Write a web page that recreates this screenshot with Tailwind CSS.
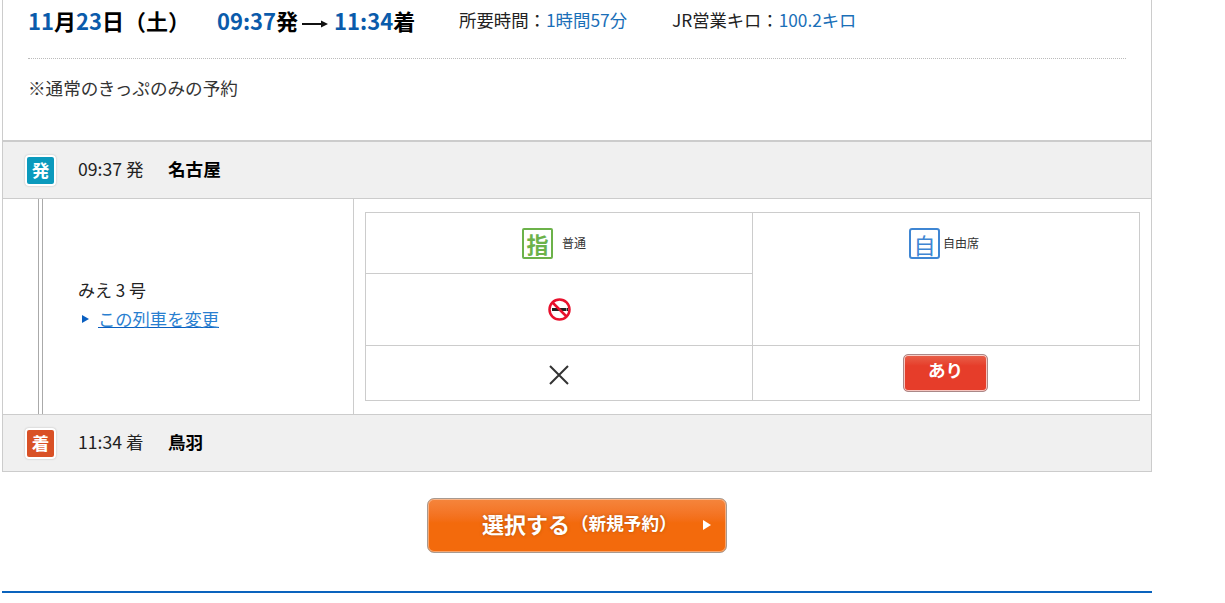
<!DOCTYPE html>
<html lang="ja">
<head>
    <meta charset="UTF-8">
    <title>列車選択</title>
    <script src="https://cdn.jsdelivr.net/npm/@tailwindcss/browser@4"></script>
</head>
<body class="bg-white text-[#222] font-['Noto_Sans_CJK_JP','Liberation_Sans',sans-serif] overflow-hidden">
<div class="w-[1225px] h-[603px] overflow-hidden">
    <div class="ml-[2px] w-[1150px]">
        <!-- Summary -->
        <div class="border-x border-[#ccc] h-[140px] px-[25px]">
            <div class="h-[59px] border-b border-dotted border-[#bbb] flex items-start pt-[4px]">
                <div class="w-[189px] text-[22px] leading-[32px] font-bold text-black whitespace-nowrap"><span class="text-[#0a5bab]">11</span>月<span class="text-[#0a5bab]">23</span>日（土）</div>
                <div class="w-[242px] flex items-center text-[22px] leading-[32px] font-bold text-black whitespace-nowrap">
                    <span class="text-[#0a5bab]">09:37</span>発
                    <svg class="w-[26px] h-[10px] ml-[4px] mr-[6px] mt-[8px]" viewBox="0 0 26 10"><path d="M0 5h20" stroke="#111" stroke-width="2"/><path d="M19 1.5l7 3.5-7 3.500z" fill="#111"/></svg>
                    <span class="text-[#0a5bab]">11:34</span>着
                </div>
                <div class="w-[213px] text-[17.4px] leading-[32px] text-[#222] whitespace-nowrap">所要時間：<span class="text-[#1a6fb8]">1時間57分</span></div>
                <div class="text-[17.3px] leading-[32px] text-[#222] whitespace-nowrap">JR営業キロ：<span class="text-[#1a6fb8]">100.2キロ</span></div>
            </div>
            <p class="mt-[17px] text-[17.6px] leading-[24px] text-[#333]">※通常のきっぷのみの予約</p>
        </div>

        <!-- Itinerary -->
        <div class="border border-t-2 border-[#ccc]">
            <div class="h-[57px] bg-[#f0f0f0] border-b border-[#ccc] flex items-center pl-[22px]">
                <span class="w-[31px] h-[31px] flex items-center justify-center rounded-[4px] border-2 border-white shadow-[0_0_2px_rgba(0,0,0,0.25)] bg-[#0b9abd] text-white text-[17.6px] font-bold leading-none">発</span>
                <span class="ml-[22px] w-[90px] pb-[2px] text-[17.6px] text-[#222]">09:37 発</span>
                <span class="pb-[2px] text-[17.6px] font-bold text-black">名古屋</span>
            </div>
            <div class="h-[216px] flex border-b border-[#ccc]">
                <div class="w-[351px] border-r border-[#ccc] flex">
                    <div class="ml-[35px] w-[5px] border-x border-[#aaa]"></div>
                    <div class="ml-[35px] pt-[78px]">
                        <p class="text-[17px] leading-[26px] text-[#222]">みえ 3 号</p>
                        <a href="#" class="mt-[3px] flex items-center text-[17.3px] leading-[26px]">
                            <span class="ml-[4px] mr-[9px] w-0 h-0 border-y-[4px] border-y-transparent border-l-[7px] border-l-[#0a5fc0]"></span>
                            <span class="text-[#2a7fd0] underline decoration-[#0a5fc0]">この列車を変更</span>
                        </a>
                    </div>
                </div>
                <div class="flex-1 pt-[13px] pl-[11px] pr-[11px]">
                    <div class="w-[775px] h-[189px] border border-[#ccc] grid grid-cols-[387px_1fr] grid-rows-[61px_72px_1fr]">
                        <div class="border-b border-r border-[#ccc] flex items-center justify-center pr-[10px]">
                            <span class="w-[31px] h-[31px] flex items-center justify-center border-[2.5px] border-[#6cb24a] rounded-[2px] text-[#6cb24a] text-[22px] font-bold leading-none">指</span>
                            <span class="ml-[9px] text-[12px] text-[#333]">普通</span>
                        </div>
                        <div class="row-span-2 border-b border-[#ccc] flex items-start justify-center pt-[15px] pr-[4px]">
                            <span class="w-[31px] h-[31px] flex items-center justify-center border-[2.5px] border-[#3f86d3] rounded-[3px] text-[#3f86d3] text-[22px] leading-none">自</span>
                            <span class="ml-[3px] mt-[6px] text-[12px] text-[#333]">自由席</span>
                        </div>
                        <div class="border-b border-r border-[#ccc] flex items-center justify-center">
                            <svg class="w-[25px] h-[25px]" viewBox="0 0 25 25">
                                <rect x="5" y="11" width="14" height="3" fill="#222"/>
                                <rect x="19.500" y="11" width="1.500" height="3" fill="#222"/>
                                <circle cx="12.500" cy="12.500" r="10" fill="none" stroke="#e8112d" stroke-width="2.500"/>
                                <path d="M5.500 5.500l14 14" stroke="#e8112d" stroke-width="2.500"/>
                            </svg>
                        </div>
                        <div class="border-r border-[#ccc] flex items-center justify-center pt-[3px]">
                            <svg class="w-[20px] h-[20px]" viewBox="0 0 20 20"><path d="M1 1l18 18M19 1L1 19" stroke="#333" stroke-width="2" fill="none"/></svg>
                        </div>
                        <div class="flex items-center justify-center pr-[1px]">
                            <span class="w-[85px] h-[38px] flex items-center justify-center pb-[6px] rounded-[5px] border border-[#a88] ring-1 ring-inset ring-white/70 bg-gradient-to-b from-[#e8604a] from-0% to-[#e63d2a] to-30% text-white text-[17.6px] font-bold leading-none">あり</span>
                        </div>
                    </div>
                </div>
            </div>
            <div class="h-[56px] bg-[#f0f0f0] flex items-center pl-[22px]">
                <span class="w-[31px] h-[31px] flex items-center justify-center rounded-[4px] border-2 border-white shadow-[0_0_2px_rgba(0,0,0,0.25)] bg-[#d95126] text-white text-[17.6px] font-bold leading-none">着</span>
                <span class="ml-[22px] w-[90px] pb-[2px] text-[17.6px] text-[#222]">11:34 着</span>
                <span class="pb-[2px] text-[17.6px] font-bold text-black">鳥羽</span>
            </div>
        </div>

        <!-- Action -->
        <div class="pt-[26px] flex justify-center">
            <button class="relative w-[300px] h-[55px] rounded-[7px] border border-[#a89a90] ring-1 ring-inset ring-white/40 bg-gradient-to-b from-[#f5853c] from-0% to-[#f36a0c] to-45% text-white font-bold flex items-center pl-[54px] pb-[6px]">
                <span class="text-[22px] leading-none [text-shadow:0_0_3px_rgba(120,60,0,0.5)]">選択する</span>
                <span class="text-[17.6px] leading-none ml-[1px] [text-shadow:0_0_3px_rgba(120,60,0,0.5)]">（新規予約）</span>
                <span class="absolute right-[15px] top-[21px] w-0 h-0 border-y-[5px] border-y-transparent border-l-[8px] border-l-white"></span>
            </button>
        </div>

        <div class="mt-[38px] h-[2px] bg-[#0a63bd]"></div>
    </div>
</div>
</body>
</html>
